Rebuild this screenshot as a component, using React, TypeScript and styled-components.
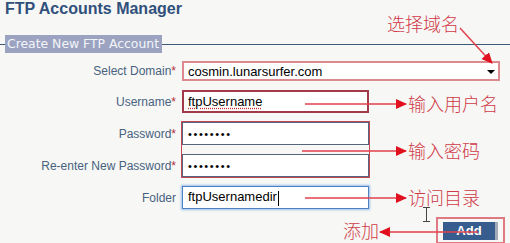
import React from "react";
import styled, { createGlobalStyle, css } from "styled-components";

const GlobalStyle = createGlobalStyle`
  html, body {
    margin: 0;
    padding: 0;
    background: #f7f7f5;
  }
  body {
    font-family: "Liberation Sans", Arial, sans-serif;
  }
`;

const Page = styled.div`
  position: relative;
  width: 510px;
  height: 243px;
  overflow: hidden;
`;

const Title = styled.h1`
  margin: 0;
  padding-left: 5px;
  font-size: 16px;
  line-height: 18px;
  font-weight: bold;
  color: #30507c;
`;

const LegendRow = styled.div`
  display: flex;
  align-items: center;
  height: 18px;
  margin-top: 17px;
`;

const Rule = styled.div<{ $stretch?: boolean }>`
  height: 1px;
  background: #3f5a76;
  ${(p) => (p.$stretch ? "flex: 1;" : "width: 5px;")}
`;

const Legend = styled.div`
  padding: 0 3px 0 2px;
  background: #9ba3c1;
  color: #f4f5f9;
  font-family: "DejaVu Sans", Verdana, sans-serif;
  font-size: 12.4px;
  line-height: 18px;
  white-space: nowrap;
`;

const Form = styled.div`
  display: grid;
  grid-template-columns: 176px 318px;
  column-gap: 6px;
  row-gap: 9px;
  align-items: center;
  margin-top: 8px;
`;

const Label = styled.div<{ $row?: number }>`
  text-align: right;
  font-size: 12px;
  color: #48627f;
  white-space: nowrap;
  ${(p) => p.$row && `grid-row: ${p.$row};`}
`;

const Star = styled.span`
  color: #b3303c;
`;

type Tone = "plain" | "marked" | "focus" | "select";

const Box = styled.div<{ $tone?: Tone; $wide?: boolean }>`
  box-sizing: border-box;
  display: flex;
  align-items: center;
  justify-content: space-between;
  width: ${(p) => (p.$wide ? "318px" : "187px")};
  height: ${(p) => (p.$tone === "select" ? "20px" : "23px")};
  padding: 0 5px;
  background: #fff;
  border: 1px solid #55667c;
  font-size: 13px;
  color: #000;
  ${(p) =>
    p.$tone === "marked" &&
    css`
      border: 2px solid #a33a4a;
      padding: 0 4px;
    `}
  ${(p) =>
    p.$tone === "focus" &&
    css`
      border: 1px solid #4d7fc4;
      box-shadow: 0 0 2px 1px #9cc0ea;
    `}
  ${(p) =>
    p.$tone === "select" &&
    css`
      border: 2px solid #dc8a90;
      padding: 0 3px 0 4px;
    `}
`;

const DropArrow = styled.span`
  width: 0;
  height: 0;
  margin-top: 2px;
  border-left: 4px solid transparent;
  border-right: 4px solid transparent;
  border-top: 4px solid #000;
`;

const Misspelled = styled.span`
  text-decoration: underline dotted #cc2a34;
  text-underline-offset: 2px;
`;

const Dots = styled.span`
  font-size: 11px;
  letter-spacing: 1.6px;
`;

const Caret = styled.span`
  display: inline-block;
  width: 1px;
  height: 15px;
  margin-left: 1px;
  background: #000;
  vertical-align: middle;
`;

const PairGroup = styled.div`
  grid-column: 2;
  grid-row: 3 / span 2;
  display: flex;
  flex-direction: column;
  gap: 9px;
  width: 187px;
  outline: 1px solid #c94656;
`;

const ButtonRow = styled.div`
  display: flex;
  justify-content: flex-end;
  margin-top: 8px;
  padding-right: 5px;
`;

const Marked = styled.div`
  padding: 2px 5px;
  border: 2px solid #e07a82;
`;

const AddButton = styled.button`
  box-sizing: border-box;
  width: 55px;
  height: 18px;
  padding: 0;
  border: none;
  border-right: 3px solid #a2aab8;
  background: #375d8f;
  color: #fff;
  font-family: "Liberation Sans", Arial, sans-serif;
  font-size: 13px;
  font-weight: bold;
  line-height: 18px;
`;

const Overlay = styled.svg`
  position: absolute;
  left: 0;
  top: 0;
  pointer-events: none;
`;

const Note = styled.span<{ $x: number; $y: number }>`
  position: absolute;
  left: ${(p) => p.$x}px;
  top: ${(p) => p.$y}px;
  font-family: "Noto Sans CJK SC", sans-serif;
  font-size: 18px;
  font-weight: 300;
  line-height: 20px;
  color: #d03a48;
  white-space: nowrap;
`;

const arrows = [
  { x1: 460, y1: 28, x2: 492, y2: 63 },
  { x1: 305, y1: 104, x2: 406, y2: 104 },
  { x1: 302, y1: 151, x2: 406, y2: 151 },
  { x1: 305, y1: 198, x2: 406, y2: 198 },
  { x1: 478, y1: 232, x2: 380, y2: 232 },
];

const notes = [
  { text: "选择域名", x: 387, y: 13 },
  { text: "输入用户名", x: 408, y: 93 },
  { text: "输入密码", x: 408, y: 140 },
  { text: "访问目录", x: 408, y: 187 },
  { text: "添加", x: 343, y: 220 },
];

const App: React.FC = () => {
  return (
    <Page>
      <GlobalStyle />
      <Title>FTP Accounts Manager</Title>
      <LegendRow>
        <Rule />
        <Legend>Create New FTP Account</Legend>
        <Rule $stretch />
      </LegendRow>
      <Form>
        <Label>
          Select Domain<Star>*</Star>
        </Label>
        <Box $tone="select" $wide>
          <span>cosmin.lunarsurfer.com</span>
          <DropArrow />
        </Box>

        <Label>
          Username<Star>*</Star>
        </Label>
        <Box $tone="marked">
          <Misspelled>ftpUsername</Misspelled>
        </Box>

        <Label $row={3}>
          Password<Star>*</Star>
        </Label>
        <Label $row={4}>
          Re-enter New Password<Star>*</Star>
        </Label>
        <PairGroup>
          <Box>
            <Dots>••••••••</Dots>
          </Box>
          <Box>
            <Dots>••••••••</Dots>
          </Box>
        </PairGroup>

        <Label>Folder</Label>
        <Box $tone="focus">
          <span>
            ftpUsernamedir
            <Caret />
          </span>
        </Box>
      </Form>
      <ButtonRow>
        <Marked>
          <AddButton>Add</AddButton>
        </Marked>
      </ButtonRow>

      <Overlay width={510} height={243} viewBox="0 0 510 243">
        <defs>
          <marker
            id="head"
            markerWidth="11"
            markerHeight="10"
            refX="10"
            refY="5"
            orient="auto"
            markerUnits="userSpaceOnUse"
          >
            <path d="M0 0 L11 5 L0 10 Z" fill="#e0101e" />
          </marker>
        </defs>
        {arrows.map((a, i) => (
          <line
            key={i}
            x1={a.x1}
            y1={a.y1}
            x2={a.x2}
            y2={a.y2}
            stroke="#e2404c"
            strokeWidth={1.5}
            markerEnd="url(#head)"
          />
        ))}
        <path
          d="M423 207.5 H430 M426.5 207.5 V221.5 M423 221.5 H430"
          stroke="#444"
          strokeWidth={1}
          fill="none"
        />
      </Overlay>
      {notes.map((n) => (
        <Note key={n.text} $x={n.x} $y={n.y}>
          {n.text}
        </Note>
      ))}
    </Page>
  );
};

export default App;
